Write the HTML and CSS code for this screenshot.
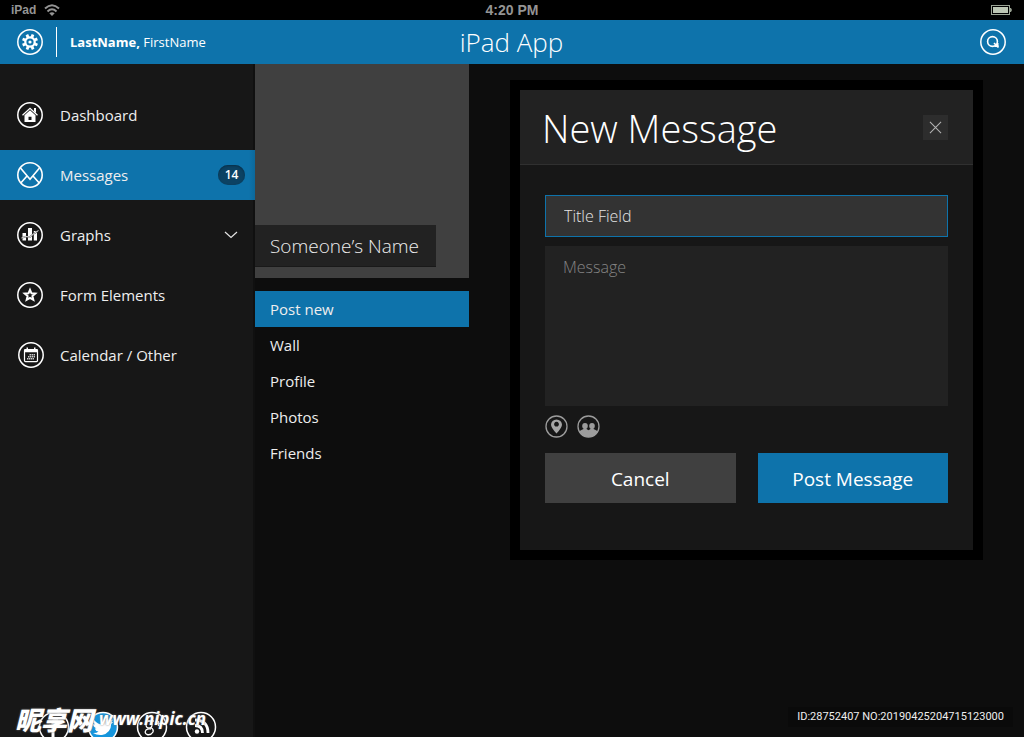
FILE: index.html
```html
<!DOCTYPE html>
<html lang="en">
<head>
<meta charset="utf-8">
<meta name="viewport" content="width=device-width, initial-scale=1">
<title>iPad App</title>
<link rel="stylesheet" href="styles.css">
</head>
<body>
<div class="app">
  <div class="status">
    <div class="status-left">
      <span>iPad</span>
      <svg class="wifi" viewBox="0 0 16 12" aria-hidden="true"><g fill="none" stroke="currentColor" stroke-width="2"><path d="M1 4.600Q8-2 15 4.600"/><path d="M3.500 7.400Q8 3.200 12.500 7.400"/></g><path d="M5.300 9.300Q8 7 10.700 9.300L8 12z" fill="currentColor"/></svg>
    </div>
    <div class="status-time">4:20 PM</div>
    <div class="status-right">
      <svg class="battery" viewBox="0 0 22 10" aria-hidden="true"><rect x=".5" y=".5" width="18" height="9" fill="none" stroke="#9aa394"/><rect x="2" y="2" width="15" height="6" fill="#bcc6b4"/><path d="M19 3h1l1 2-1 2h-1z" fill="#9aa394"/></svg>
    </div>
  </div>

  <header class="topbar">
    <div class="user">
      <button class="round" type="button" aria-label="Settings">
        <svg viewBox="0 0 26 26"><circle cx="13" cy="13" r="12.200" fill="none" stroke="#fff" stroke-width="1.500"/><circle cx="13" cy="13" r="4.700" fill="none" stroke="#fff" stroke-width="2.200"/><circle cx="13" cy="13" r="1.600" fill="#fff"/><g stroke="#fff" stroke-width="2.800"><path d="M13 5v3M13 18v3M5 13h3M18 13h3" transform="rotate(22 13 13)"/><path d="M13 5v3M13 18v3M5 13h3M18 13h3" transform="rotate(67 13 13)"/></g></svg>
      </button>
      <span class="divider"></span>
      <span class="username"><b>LastName,</b> FirstName</span>
    </div>
    <h1 class="app-title">iPad App</h1>
    <div class="tools">
      <button class="round" type="button" aria-label="Search">
        <svg viewBox="0 0 26 26"><circle cx="13" cy="13" r="12.200" fill="none" stroke="#fff" stroke-width="1.500"/><circle cx="12.500" cy="12.500" r="4.900" fill="none" stroke="#fff" stroke-width="1.600"/><path d="M14 14l4.500 4.500M14.500 17.200h4.300M17.700 14v4.500" stroke="#fff" stroke-width="1.600" fill="none"/></svg>
      </button>
    </div>
  </header>

  <div class="body">
    <aside class="sidebar">
      <nav class="nav">
        <a class="nav-item" href="#">
          <svg class="ico" viewBox="0 0 26 26"><circle cx="13" cy="13" r="12.200" fill="none" stroke="#fff" stroke-width="1.500"/><path d="M5.500 13.300L13 6.300l7.500 7" fill="none" stroke="#fff" stroke-width="1.300"/><path d="M17 6h2v5l-2-1.800z" fill="#fff"/><path fill-rule="evenodd" d="M7.500 13.200L13 8.200l5.500 5V20h-11zM11.500 14.800V18h3v-3.200z" fill="#fff"/></svg>
          <span>Dashboard</span>
        </a>
        <a class="nav-item active" href="#">
          <svg class="ico" viewBox="0 0 26 26"><g fill="none" stroke="#fff" stroke-width="1.600"><circle cx="13" cy="13" r="12.200"/><path d="M3.500 6L13 17.300 22.500 6M4 20.800l6-6.800M22 20.800L16 14"/></g></svg>
          <span>Messages</span>
          <span class="badge">14</span>
        </a>
        <a class="nav-item" href="#">
          <svg class="ico" viewBox="0 0 26 26"><circle cx="13" cy="13" r="12.200" fill="none" stroke="#fff" stroke-width="1.500"/><path d="M5.500 11H9v7.500H5.500zM11 6h4v12.500h-4zM16.800 9H20v9.500h-3.200z" fill="#fff"/><path d="M4.500 16L9 14.500l4 .5 4-3.500 4-2.500" fill="none" stroke="#555" stroke-width="1.600"/><path d="M4.500 16L9 14.500l4 .5 4-3.500 4.500-3" fill="none" stroke="#fff" stroke-width=".8"/></svg>
          <span>Graphs</span>
          <svg class="chevron" viewBox="0 0 14 8"><path d="M1 1l6 5.500L13 1" fill="none" stroke="#e4e4e4" stroke-width="1.200"/></svg>
        </a>
        <a class="nav-item" href="#">
          <svg class="ico" viewBox="0 0 26 26"><circle cx="13" cy="13" r="12.200" fill="none" stroke="#fff" stroke-width="1.500"/><path d="M13 7.800l1.500 3.500 3.800.3-2.900 2.500.9 3.700L13 15.900l-3.300 1.900.9-3.700-2.900-2.500 3.800-.3z" fill="none" stroke="#fff" stroke-width="2"/></svg>
          <span>Form Elements</span>
        </a>
        <a class="nav-item" href="#">
          <svg class="ico" viewBox="0 0 26 26"><circle cx="14" cy="13" r="12.200" fill="none" stroke="#fff" stroke-width="1.500"/><rect x="7.500" y="7.600" width="13" height="12" rx="1" fill="none" stroke="#fff" stroke-width="1.200"/><path d="M7.500 7h13v3.300h-13zM9.500 5.500H11V8H9.500zM17 5.500h1.500V8H17z" fill="#fff"/><path d="M12.500 12.700h6M11 14.700h7M10 16.700h7" stroke="#ccc" stroke-width="1.400" stroke-dasharray="1.500 .5"/></svg>
          <span>Calendar / Other</span>
        </a>
      </nav>
      <div class="social">
        <a href="#" aria-label="Facebook"><svg viewBox="0 0 32 32"><circle cx="16" cy="16" r="14.500" fill="none" stroke="#fff" stroke-width="1.500"/><path d="M20 9h-2q-3 0-3 3v14" fill="none" stroke="#fff" stroke-width="3"/><path d="M11 15h9" stroke="#fff" stroke-width="2.500"/></svg></a>
        <a href="#" aria-label="Twitter"><svg viewBox="0 0 32 32"><circle cx="16" cy="16" r="14.500" fill="#1595dc" stroke="#fff" stroke-width="1.500"/><path d="M7 9q4 4.500 8.500 4.500Q15.300 9 19.500 8.500q2.500 0 3.500 1.300l3-1.200-1.600 2.600 2-.4-2.200 2.200Q24 22 15 24q-5 .6-9-2 4 .1 5.500-1.600-3-.3-3.800-3l1.700-.1Q6 16 6.300 13l1.700.5Q5.500 11 7 9z" fill="#fff"/></svg></a>
        <a href="#" aria-label="Google Plus"><svg viewBox="0 0 32 32"><g fill="none" stroke="#fff" stroke-width="1.300"><circle cx="16" cy="16" r="14.500" stroke-width="1.500"/><ellipse cx="13" cy="13.500" rx="3" ry="3.500"/><path d="M12 10h6M15 16.500q3 2 2 4.500-2 3.500-6 2.500-3-1.500-1-4.500 2-1.500 5-1M20 12.500h5M22.500 10v5"/></g></svg></a>
        <a href="#" aria-label="RSS"><svg viewBox="0 0 32 32"><g fill="none" stroke="#fff"><circle cx="16" cy="16" r="14.500" stroke-width="1.500"/><path d="M10 9q13 0 13 13M10 14.500q7.500 0 7.500 7.500" stroke-width="2.800"/></g><circle cx="12" cy="20.500" r="2.200" fill="#fff"/></svg></a>
      </div>
      <div class="mark"><span class="mark-cn" lang="zh">昵享网</span><span class="mark-url">www.nipic.cn</span></div>
    </aside>

    <section class="profile">
      <div class="photo"><h2 class="person">Someone’s Name</h2></div>
      <nav class="menu">
        <a class="menu-item active" href="#">Post new</a>
        <a class="menu-item" href="#">Wall</a>
        <a class="menu-item" href="#">Profile</a>
        <a class="menu-item" href="#">Photos</a>
        <a class="menu-item" href="#">Friends</a>
      </nav>
    </section>

    <main class="main">
      <form class="dialog">
        <div class="dialog-head">
          <h2>New Message</h2>
          <button class="close" type="button" aria-label="Close"><svg viewBox="0 0 14 14"><path d="M1 1l12 12M13 1L1 13" stroke="#b4b4b4" stroke-width="1.100"/></svg></button>
        </div>
        <div class="dialog-body">
          <input class="field" type="text" aria-label="Title" placeholder="Title Field">
          <textarea class="area" aria-label="Message" placeholder="Message"></textarea>
          <div class="attach">
            <button type="button" aria-label="Add location"><svg viewBox="0 0 23 23"><circle cx="11.500" cy="11.500" r="10.500" fill="none" stroke="#9c9c9c" stroke-width="1.300"/><path fill-rule="evenodd" d="M11.500 18.500Q6 12.500 6 9.700a5.500 5.200 0 0 1 11 0Q17 12.500 11.500 18.500zM11.500 6.800a2.400 2.400 0 1 0 .01 0z" fill="#a5a5a5"/></svg></button>
            <button type="button" aria-label="Add people"><svg viewBox="0 0 23 23"><circle cx="11.500" cy="11.500" r="10.500" fill="none" stroke="#9c9c9c" stroke-width="1.300"/><g fill="#9c9c9c"><ellipse cx="8" cy="11" rx="2.800" ry="3"/><ellipse cx="15" cy="11" rx="2.800" ry="3"/><path d="M6.700 12h2.600v3H6.700zM13.700 12h2.600v3h-2.600z"/><path d="M2 16.500q2.500-2 4.500-2.500h3l2 1.200 2-1.200h3q2 .5 4.500 2.500-3 5.500-9.500 5.500T2 16.500z"/></g></svg></button>
          </div>
          <div class="actions">
            <button class="btn" type="button">Cancel</button>
            <button class="btn primary" type="submit">Post Message</button>
          </div>
        </div>
      </form>
      <div class="stamp">ID:28752407 NO:20190425204715123000</div>
    </main>
  </div>
</div>
</body>
</html>
```

FILE: styles.css
```css
* { box-sizing: border-box; }
body {
  margin: 0;
  background: #0d0d0d;
  color: #eee;
  font-family: "Open Sans", "Noto Sans", sans-serif;
  font-size: 15px;
}
a { color: inherit; text-decoration: none; }
button { font: inherit; color: inherit; border: 0; background: none; padding: 0; cursor: pointer; }
svg { display: block; }
h1, h2 { margin: 0; font-weight: 300; }

.app { display: flex; flex-direction: column; height: 100vh; overflow: hidden; }

.status {
  display: grid;
  grid-template-columns: 1fr auto 1fr;
  align-items: center;
  flex: none;
  height: 20px;
  padding: 0 11px;
  background: #000;
  color: #949494;
  font: bold 14px "Liberation Sans", Arial, sans-serif;
}
.status-left { display: flex; align-items: center; gap: 8px; font-size: 12px; }
.wifi { width: 16px; height: 12px; }
.status-right { display: flex; justify-content: flex-end; }
.battery { width: 22px; height: 10px; }

.topbar {
  display: grid;
  grid-template-columns: 1fr auto 1fr;
  align-items: center;
  flex: none;
  height: 44px;
  padding: 0 18px 0 17px;
  background: #0e73ab;
  color: #fff;
}
.user { display: flex; align-items: center; }
.round, .round svg { width: 26px; height: 26px; }
.divider { width: 1px; height: 30px; margin: 0 13px; background: #fff; }
.username { font-size: 13px; }
.app-title { font-size: 26px; line-height: 44px; }
.tools { display: flex; justify-content: flex-end; }

.body { display: flex; flex: 1; min-height: 0; }

.sidebar {
  position: relative;
  display: flex;
  flex-direction: column;
  justify-content: space-between;
  flex: none;
  width: 255px;
  background: #171717;
  border-right: 2px solid #101010;
}
.nav { display: flex; flex-direction: column; gap: 10px; padding-top: 26px; }
.nav-item {
  display: flex;
  align-items: center;
  height: 50px;
  padding: 0 15px 0 17px;
  gap: 17px;
}
.nav-item.active {
  margin-right: -2px;
  padding-right: 10px;
  background: linear-gradient(to left, #0c689b, #0e73ab 6px);
}
.ico { width: 26px; height: 26px; overflow: visible; }
.badge {
  margin-left: auto;
  width: 27px;
  border-radius: 10px;
  background: #0c4263;
  box-shadow: inset 0 1px 2px #08304a;
  font-size: 12px;
  font-weight: 600;
  line-height: 20px;
  text-align: center;
  color: #fff;
}
.chevron { width: 14px; height: 8px; margin-left: auto; }

.social { display: flex; gap: 17px; height: 26px; padding-left: 38px; overflow: hidden; }
.social a, .social svg { width: 32px; height: 32px; }
.mark {
  position: absolute;
  left: 15px;
  bottom: 6px;
  display: flex;
  align-items: center;
  gap: 6px;
  line-height: 24px;
  font-style: italic;
  font-weight: 700;
  color: #fff;
  text-shadow: 0 0 2px #777;
}
.mark-cn { font-family: "Noto Sans CJK SC", sans-serif; font-size: 26px; font-weight: 900; }
.mark-url { font-size: 17px; }

.profile { flex: none; width: 214px; }
.photo {
  display: flex;
  align-items: flex-end;
  aspect-ratio: 1;
  padding-bottom: 11px;
  background: #404040;
}
.person {
  padding: 1px 17px 0 15px;
  background: #222;
  border-bottom: 1px solid #191919;
  font-size: 19px;
  line-height: 40px;
  white-space: nowrap;
}
.menu { display: flex; flex-direction: column; margin-top: 13px; }
.menu-item { padding: 0 15px; line-height: 36px; }
.menu-item.active { background: #0e73ab; }

.main {
  display: flex;
  flex-direction: column;
  justify-content: space-between;
  align-items: flex-end;
  flex: 1;
  min-width: 0;
  padding: 16px 11px 10px 41px;
}
.dialog {
  align-self: stretch;
  margin-right: 30px;
  border: 10px solid #000;
  background: #171717;
}
.dialog-head {
  display: flex;
  align-items: center;
  justify-content: space-between;
  height: 75px;
  padding: 0 25px 0 22px;
  background: #222;
  border-bottom: 1px solid #303030;
}
.dialog-head h2 { padding-top: 2px; font-size: 38px; line-height: 72px; color: #fff; white-space: nowrap; }
.close { display: grid; place-items: center; width: 25px; height: 25px; background: #2d2d2d; }
.close svg { width: 13px; height: 13px; }
.dialog-body { display: flex; flex-direction: column; padding: 30px 25px 47px; }
.field, .area {
  width: 100%;
  border: 1px solid #0e73ab;
  border-radius: 0;
  outline: 0;
  background: #333;
  color: #ddd;
  font: 300 16px "Open Sans", "Noto Sans", sans-serif;
}
.field { height: 42px; padding: 0 18px; }
.field::placeholder { color: #e4e4e4; opacity: 1; }
.area {
  display: block;
  height: 160px;
  margin-top: 9px;
  padding: 9px 17px;
  border-color: #222;
  background: #222;
  resize: none;
}
.area::placeholder { color: #858585; opacity: 1; }
.attach { display: flex; gap: 9px; margin: 9px 0 15px; }
.attach svg { width: 23px; height: 23px; }
.actions { display: grid; grid-template-columns: 1fr 1fr; gap: 22px; }
.btn { height: 50px; padding-top: 2px; background: #404040; color: #fff; font-size: 19px; }
.btn.primary { background: #0e73ab; }

.stamp {
  padding: 0 9px;
  background: #0a0a0a;
  font-family: Roboto, "Open Sans", sans-serif;
  font-size: 11px;
  line-height: 20px;
}
```
